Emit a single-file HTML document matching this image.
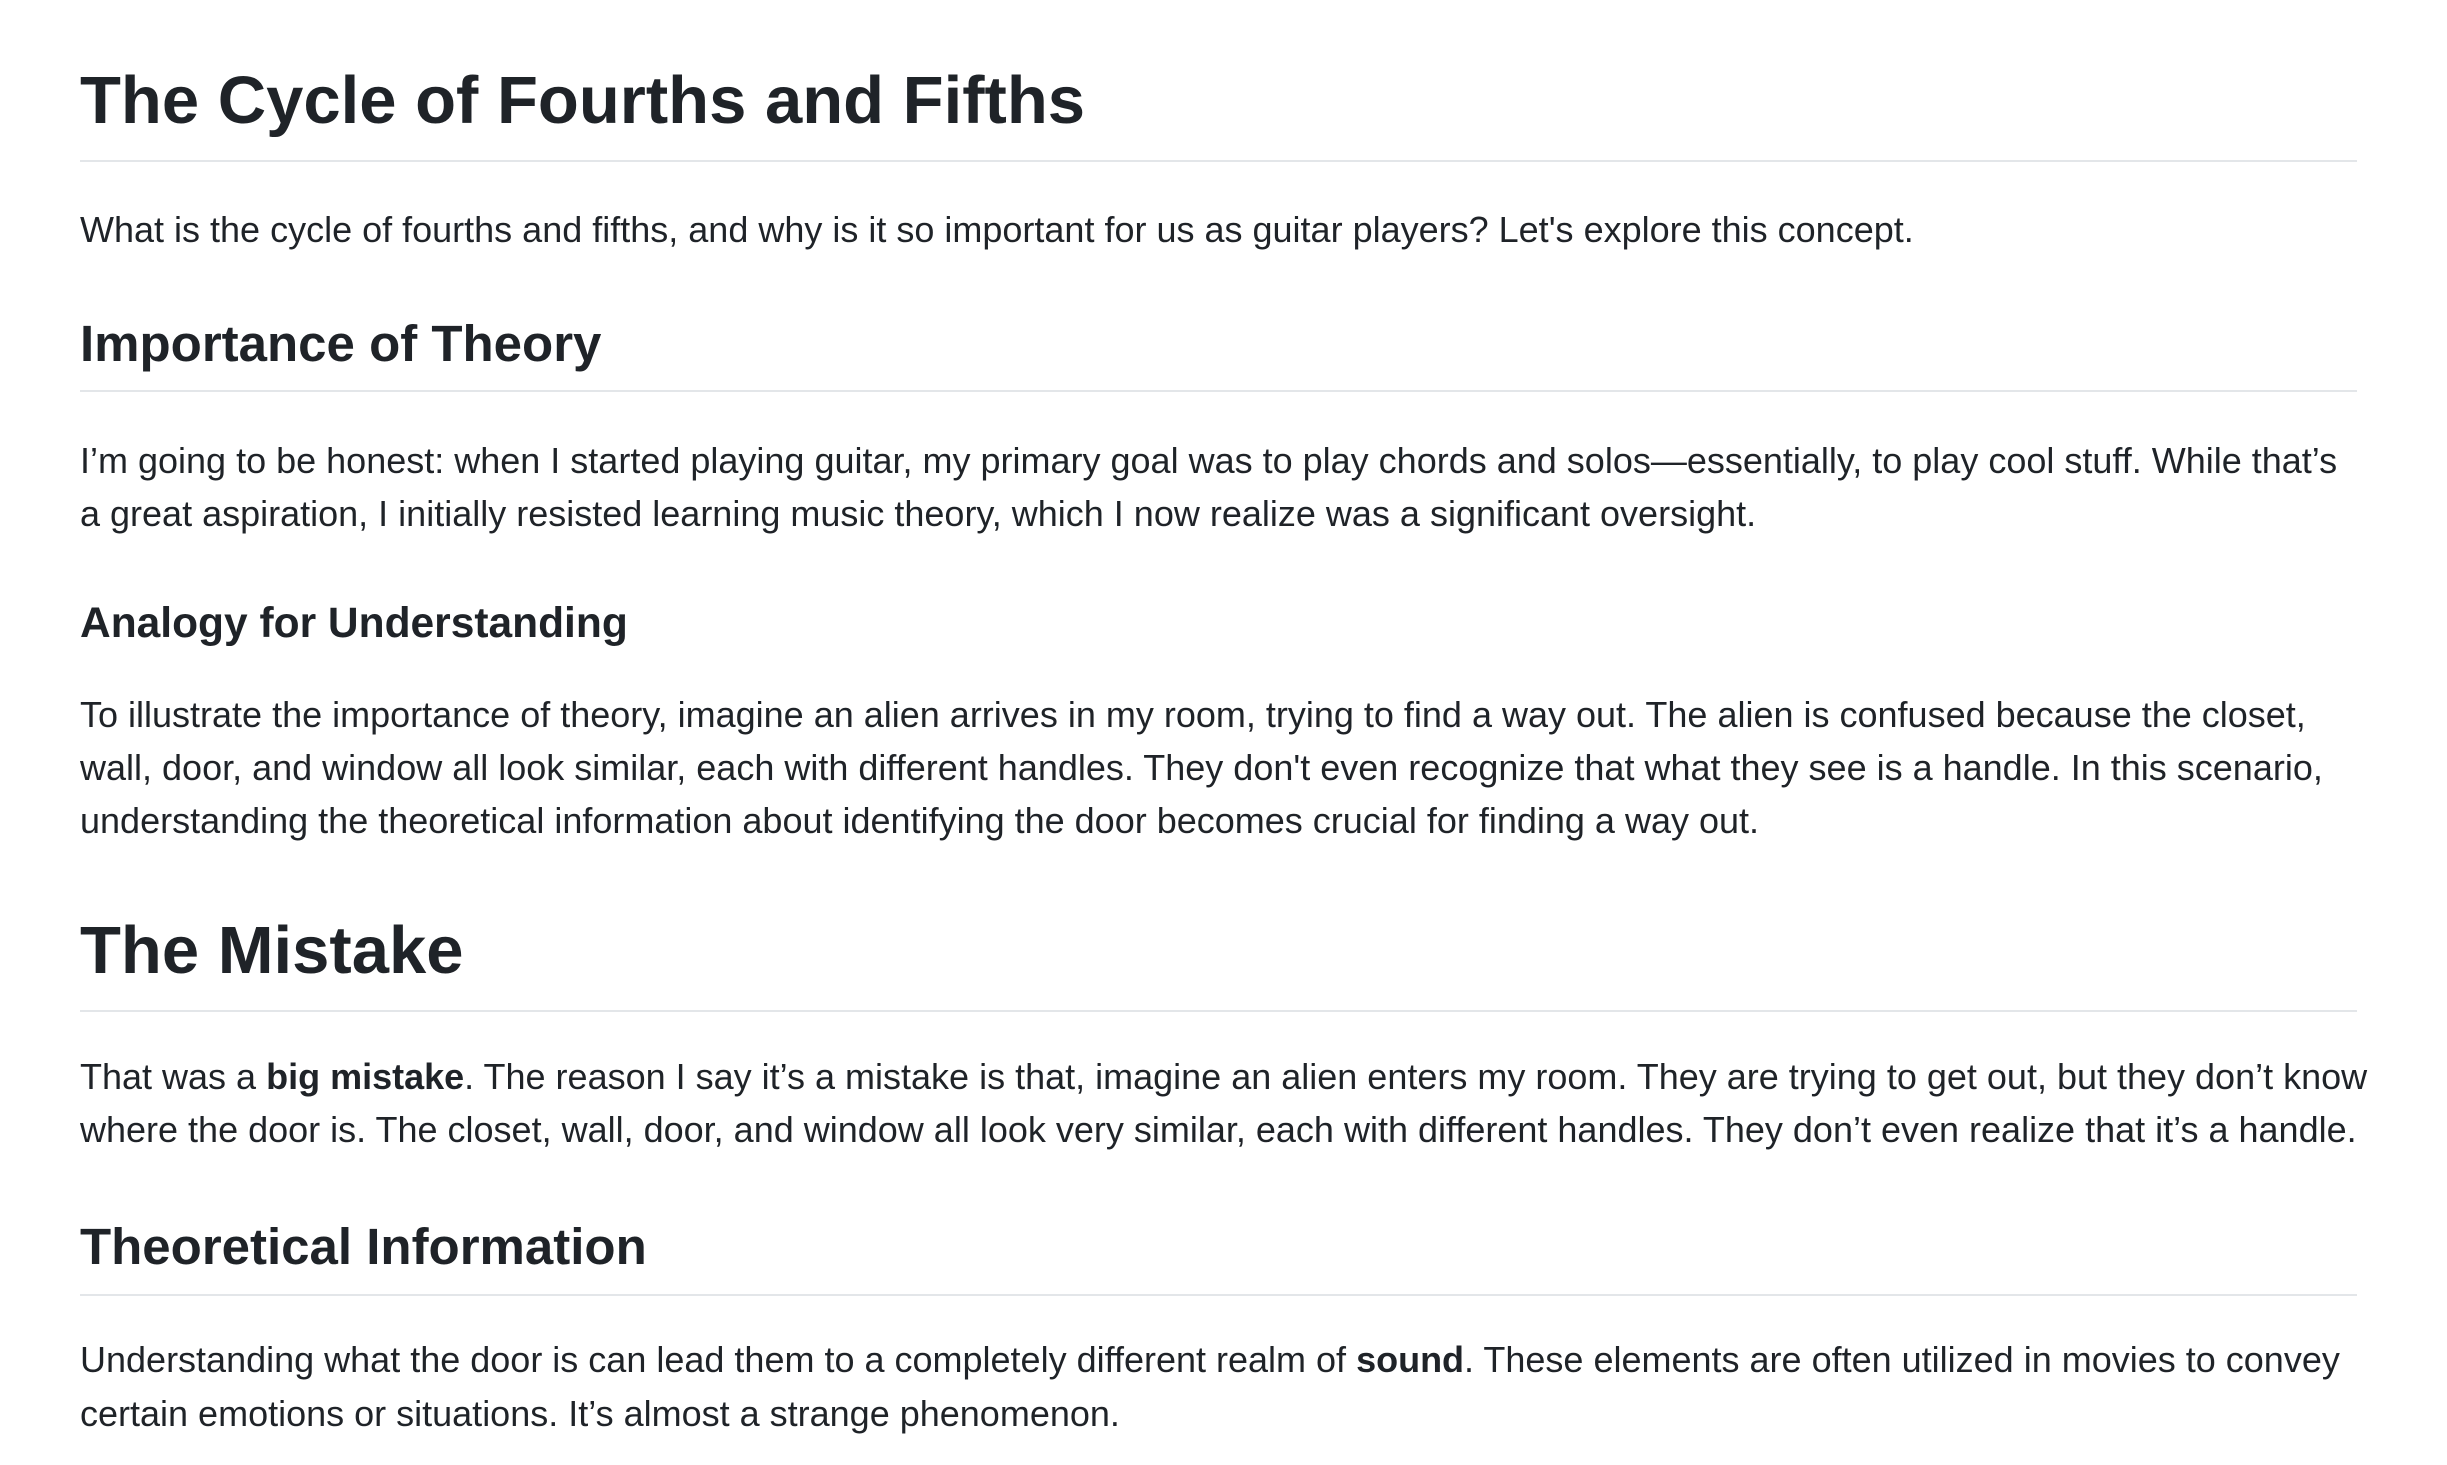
<!DOCTYPE html>
<html><head><meta charset="utf-8"><style>
html,body{margin:0;padding:0;background:#fff;}
body{width:2447px;height:1465px;position:relative;overflow:hidden;font-family:"Liberation Sans",sans-serif;color:#1f2328;}
.l{position:absolute;left:80px;white-space:nowrap;line-height:1.117;}
.p{font-size:36px;}
.h1{font-size:67px;font-weight:bold;}
.h2{font-size:51px;font-weight:bold;}
.h3{font-size:42.5px;font-weight:bold;}
.r{position:absolute;left:80px;width:2277px;height:2px;background:#e3e6e9;}
b{font-weight:bold;}
</style></head><body>
<div class="l h1" style="top:64px">The Cycle of Fourths and Fifths</div>
<div class="r" style="top:160px"></div>
<div class="l p" style="top:210px">What is the cycle of fourths and fifths, and why is it so important for us as guitar players? Let's explore this concept.</div>
<div class="l h2" style="top:316px">Importance of Theory</div>
<div class="r" style="top:390px"></div>
<div class="l p" style="top:441px">I’m going to be honest: when I started playing guitar, my primary goal was to play chords and solos—essentially, to play cool stuff. While that’s</div>
<div class="l p" style="top:494px">a great aspiration, I initially resisted learning music theory, which I now realize was a significant oversight.</div>
<div class="l h3" style="top:600px">Analogy for Understanding</div>
<div class="l p" style="top:695px">To illustrate the importance of theory, imagine an alien arrives in my room, trying to find a way out. The alien is confused because the closet,</div>
<div class="l p" style="top:748px">wall, door, and window all look similar, each with different handles. They don't even recognize that what they see is a handle. In this scenario,</div>
<div class="l p" style="top:801px">understanding the theoretical information about identifying the door becomes crucial for finding a way out.</div>
<div class="l h1" style="top:914px">The Mistake</div>
<div class="r" style="top:1010px"></div>
<div class="l p" style="top:1057px">That was a <b>big mistake</b>. The reason I say it’s a mistake is that, imagine an alien enters my room. They are trying to get out, but they don’t know</div>
<div class="l p" style="top:1110px">where the door is. The closet, wall, door, and window all look very similar, each with different handles. They don’t even realize that it’s a handle.</div>
<div class="l h2" style="top:1219px">Theoretical Information</div>
<div class="r" style="top:1294px"></div>
<div class="l p" style="top:1340px">Understanding what the door is can lead them to a completely different realm of <b>sound</b>. These elements are often utilized in movies to convey</div>
<div class="l p" style="top:1394px">certain emotions or situations. It’s almost a strange phenomenon.</div>
</body></html>
